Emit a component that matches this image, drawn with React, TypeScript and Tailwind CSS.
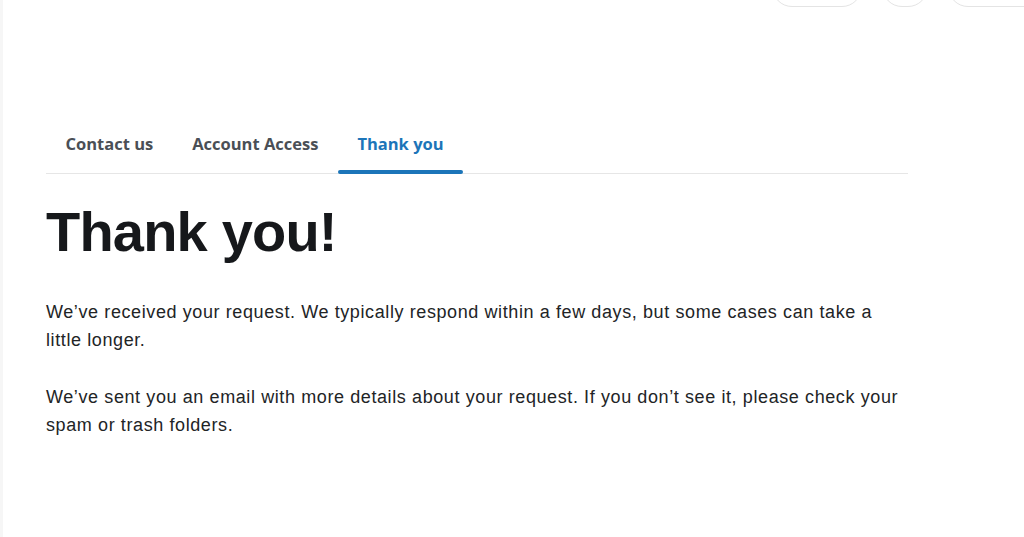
export default function App() {
  const tabs = [
    { label: "Contact us", active: false },
    { label: "Account Access", active: false },
    { label: "Thank you", active: true },
  ];

  return (
    <div className="h-[537px] w-full overflow-hidden bg-white">
      <div className="flow-root h-full border-l-[3px] border-[#f6f6f6]">
        {/* Top actions (scrolled mostly out of view) */}
        <div className="-mt-[33px] flex justify-end gap-5">
          <div className="h-10 w-[90px] rounded-full border border-[#e4e4e4]" />
          <div className="h-10 w-[46px] rounded-full border border-[#e4e4e4]" />
          <div className="-mr-[30px] h-10 w-[106px] rounded-full border border-[#e4e4e4]" />
        </div>

        <div className="ml-[43px] mt-[125px] w-[862px]">
          {/* Tabs */}
          <nav className="flex border-b border-[#e6e6e6] font-['Open_Sans',sans-serif]">
            {tabs.map((t) => (
              <div key={t.label} className="relative px-[19.5px] pb-[17px]">
                <span
                  className={`text-[16.5px] font-bold leading-[24px] ${
                    t.active ? "text-[#1c75b9]" : "text-[#4a4f56]"
                  }`}
                >
                  {t.label}
                </span>
                {t.active && (
                  <span className="absolute bottom-[-1px] left-0 right-0 h-[4px] rounded-full bg-[#1c75b9]" />
                )}
              </div>
            ))}
          </nav>

          {/* Content */}
          <h1 className="mt-[26px] font-['Liberation_Sans',Arial,sans-serif] text-[56px] font-bold leading-[64px] tracking-[-0.8px] text-[#16181b]">
            Thank you!
          </h1>
          <div className="mt-[34px] font-['Liberation_Sans',Arial,sans-serif] text-[18px] leading-[28px] tracking-[0.6px] text-[#222426]">
            <p>
              We’ve received your request. We typically respond within a few days, but some cases can take a little
              longer.
            </p>
            <p className="mt-[29px]">
              We’ve sent you an email with more details about your request. If you don’t see it, please check your
              spam or trash folders.
            </p>
          </div>
        </div>
      </div>
    </div>
  );
}
